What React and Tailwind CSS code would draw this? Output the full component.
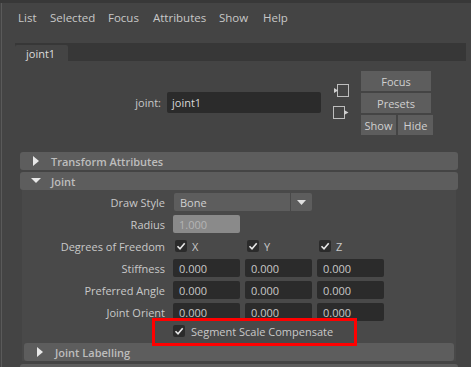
import React from "react";

const font = { fontFamily: '"Open Sans", "Liberation Sans", sans-serif' };

function Check() {
  return (
    <div className="w-[12px] h-[12px] bg-[#2b2b2b] rounded-[2px] flex items-center justify-center">
      <svg width="10" height="10" viewBox="0 0 10 10">
        <path d="M1.5 5.2 L4 7.8 L8.7 2.2" fill="none" stroke="#e6e6e6" strokeWidth="1.6" />
      </svg>
    </div>
  );
}

function Field({ value }) {
  return (
    <div className="w-[67px] h-[18px] bg-[#2b2b2b] rounded-[2px] pl-[6px] flex items-center text-[#c8c8c8]">
      {value}
    </div>
  );
}

function Row({ label, children }) {
  return (
    <div className="flex items-center h-[18px]">
      <div className="w-[144px] text-right text-[#c8c8c8] pr-[1px]">{label}</div>
      <div className="ml-[7px] flex items-center">{children}</div>
    </div>
  );
}

function Header({ open, title, className = "" }) {
  return (
    <div className={"h-[18px] bg-[#5d5d5d] rounded-[3px] flex items-center " + className}>
      <div className="w-[31px] flex justify-center">
        {open ? (
          <svg width="10" height="8" viewBox="0 0 10 8">
            <path d="M0 1 L10 1 L5 6 Z" fill="#e8e8e8" />
          </svg>
        ) : (
          <svg width="6" height="10" viewBox="0 0 6 10">
            <path d="M0 0 L6 5 L0 10 Z" fill="#e8e8e8" />
          </svg>
        )}
      </div>
      <span className="font-semibold text-[#bdbdbd]">{title}</span>
    </div>
  );
}

export default function App() {
  const menu = [
    ["List", "w-[32px]"],
    ["Selected", "w-[58px]"],
    ["Focus", "w-[45px]"],
    ["Attributes", "w-[66px]"],
    ["Show", "w-[44px]"],
    ["Help", "w-[40px]"],
  ];
  return (
    <div className="w-[471px] h-[367px] bg-[#444444] overflow-hidden text-[11px] leading-none" style={font}>
      <div className="h-[3px] bg-[#383838]" />
      <div className="h-[364px] ml-[1px] border-l-[1px] border-[#5a5a5a]">
        {/* menu bar */}
        <div className="h-[30px] flex items-center pl-[16px] text-[#c8c8c8] text-[11.5px]">
          {menu.map(([m, w]) => (
            <span key={m} className={w}>{m}</span>
          ))}
        </div>

        {/* tab strip */}
        <div className="mt-[10px] ml-[13px] w-[451px] h-[18px] bg-[#373737] flex items-end">
          <div className="w-[53px] h-[16px] bg-[#444444] rounded-t-[2px] pl-[11px] flex items-center text-[#dcdcdc]">
            joint1
          </div>
        </div>

        {/* node row */}
        <div className="flex items-start pt-[10px] h-[91px]">
          <div className="mt-[21px] flex items-center">
            <div className="w-[159px] text-right text-[#c8c8c8]">joint:</div>
            <div className="ml-[6px] w-[154px] h-[21px] bg-[#2b2b2b] rounded-[2px] pl-[5px] flex items-center text-[#d8d8d8]">
              joint1
            </div>
          </div>
          <div className="ml-[12px] mt-[13px] flex flex-col gap-[9px]">
            <svg width="17" height="13" viewBox="0 0 17 13">
              <rect x="4.5" y="0.5" width="11" height="12" fill="none" stroke="#bdbdbd" />
              <path d="M1 4 L5 6.5 L1 9 Z" fill="#d0d0d0" />
            </svg>
            <svg width="17" height="13" viewBox="0 0 17 13">
              <rect x="0.5" y="0.5" width="11" height="12" fill="none" stroke="#bdbdbd" />
              <path d="M11 4 L15.5 6.5 L11 9 Z" fill="#d0d0d0" />
            </svg>
          </div>
          <div className="ml-[11px] flex flex-col gap-[2px] text-[#d0d0d0]">
            <div className="w-[70px] h-[20px] bg-[#5d5d5d] flex items-center justify-center">Focus</div>
            <div className="w-[70px] h-[20px] bg-[#5d5d5d] flex items-center justify-center">Presets</div>
            <div className="flex gap-[2px]">
              <div className="w-[35px] h-[20px] bg-[#5d5d5d] flex items-center justify-center">Show</div>
              <div className="w-[35px] h-[20px] bg-[#5d5d5d] flex items-center justify-center">Hide</div>
            </div>
          </div>
        </div>

        {/* attribute frames */}
        <div className="ml-[18px] w-[438px]">
          <Header title="Transform Attributes" />
          <Header open title="Joint" className="mt-[2px]" />
          <div className="mx-[2px] bg-[#494949] pt-[3px] relative">
            <div className="flex flex-col gap-[4px]">
              <Row label="Draw Style">
                <div className="ml-[1px] flex">
                  <div className="w-[116px] h-[18px] bg-[#5d5d5d] rounded-l-[2px] pl-[6px] flex items-center text-[#d0d0d0]">Bone</div>
                  <div className="ml-[1px] w-[21px] h-[18px] bg-[#5d5d5d] rounded-r-[2px] flex items-center justify-center">
                    <svg width="9" height="5" viewBox="0 0 9 5">
                      <path d="M0 0 L9 0 L4.5 5 Z" fill="#e0e0e0" />
                    </svg>
                  </div>
                </div>
              </Row>
              <Row label="Radius">
                <div className="w-[67px] h-[18px] bg-[#8a8a8a] rounded-[2px] pl-[6px] flex items-center text-[#b4b4b4]">1.000</div>
              </Row>
              <Row label="Degrees of Freedom">
                {["X", "Y", "Z"].map((a) => (
                  <div key={a} className="w-[72px] flex items-center pl-[2px] gap-[5px] text-[#c8c8c8]">
                    <Check />
                    <span>{a}</span>
                  </div>
                ))}
              </Row>
              {["Stiffness", "Preferred Angle", "Joint Orient"].map((l) => (
                <Row key={l} label={l}>
                  <div className="flex gap-[5px]">
                    <Field value="0.000" />
                    <Field value="0.000" />
                    <Field value="0.000" />
                  </div>
                </Row>
              ))}
            </div>
            <div className="mt-[1px] h-[18px] flex items-center pl-[151px] gap-[6px] text-[#c8c8c8]">
              <Check />
              <span>Segment Scale Compensate</span>
            </div>
            <Header title="Joint Labelling" className="mt-[3px] mx-[2px] mb-[3px]" />
            <div className="absolute left-[130px] top-[128px] w-[205px] h-[28px] border-[3px] border-[#ff0000]" />
          </div>
          <div className="h-[18px] bg-[#5d5d5d] rounded-[3px]" />
        </div>
      </div>
    </div>
  );
}
